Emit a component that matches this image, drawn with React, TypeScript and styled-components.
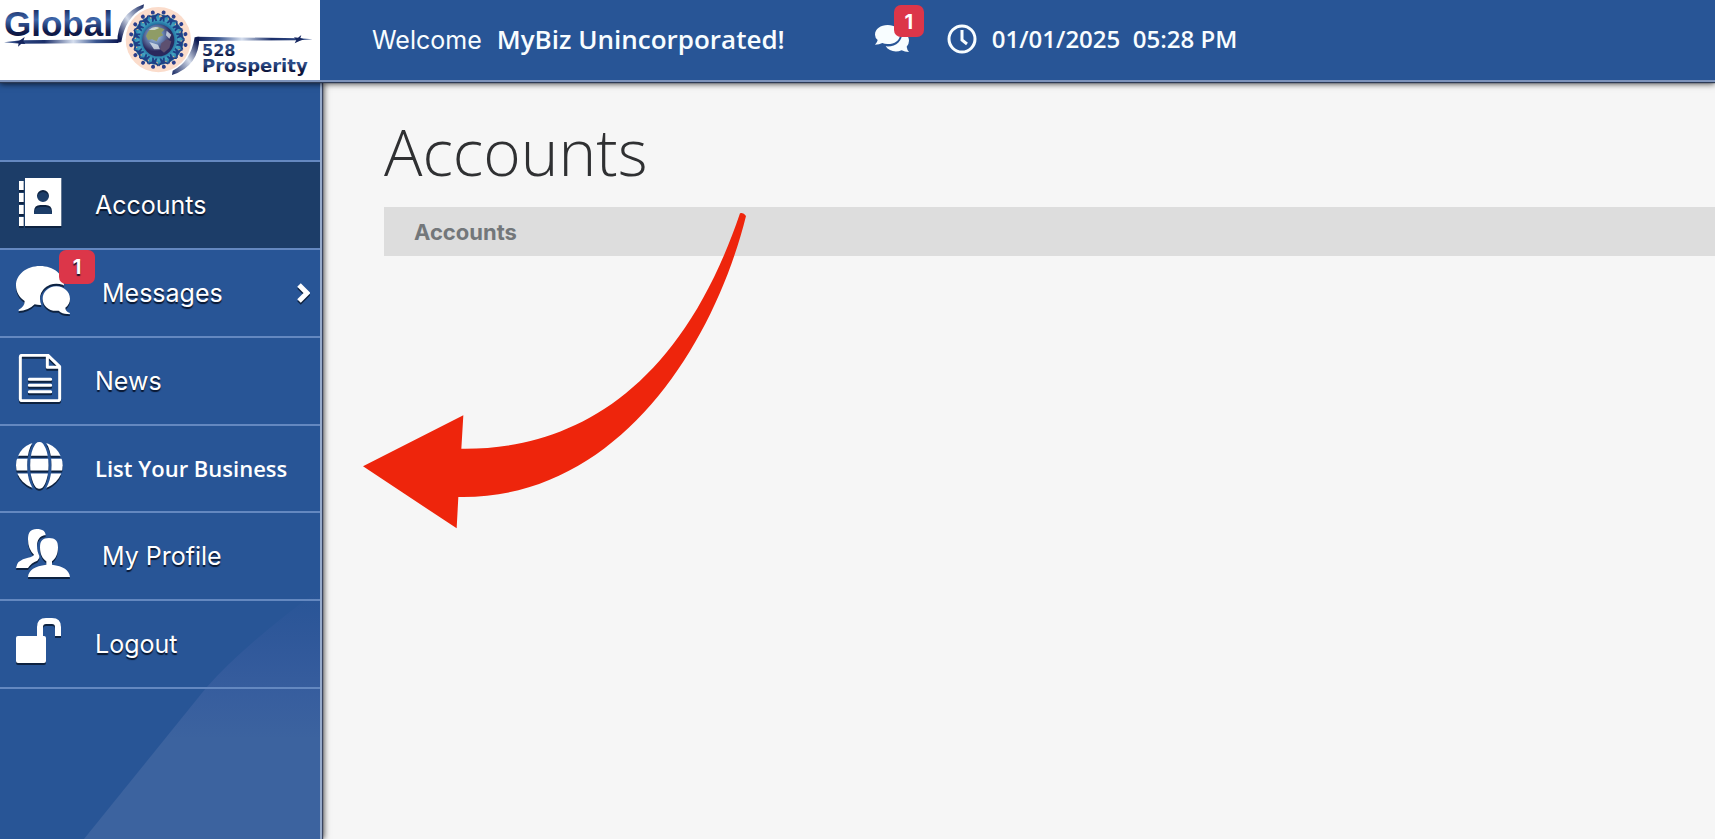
import React from "react";
import styled, { createGlobalStyle } from "styled-components";

const GlobalStyle = createGlobalStyle`
  *, *::before, *::after { box-sizing: border-box; }
  body { margin: 0; background: #f6f6f6; }
`;

const ui = `Inter, "Liberation Sans", sans-serif`;
const humanist = `"Open Sans", "Noto Sans", sans-serif`;

const Page = styled.div`
  min-height: 100vh;
  display: flex;
  flex-direction: column;
  font-family: ${ui};
`;

const Header = styled.header`
  position: relative;
  z-index: 2;
  display: flex;
  height: 82px;
  background: #285596;
  border-bottom: 2px solid #7d93bb;
  box-shadow: 0 1px 1px #2c3a55, 0 2px 6px rgba(0, 0, 0, 0.7);
  color: #f8fdff;
`;

const Brand = styled.a`
  flex: none;
  width: 320px;
  height: 80px;
  background: #fff;
  svg { display: block; }
`;

const HeaderBar = styled.div`
  display: flex;
  align-items: center;
  padding: 0 24px 2px 52px;
  white-space: nowrap;
`;

const Greeting = styled.p`
  margin: 0;
  display: flex;
  align-items: baseline;
  gap: 15px;
  font-size: 25px;
  line-height: 32px;
`;

const Company = styled.strong`
  font-family: ${humanist};
  font-size: 26px;
  font-weight: 600;
`;

const Alerts = styled.a`
  position: relative;
  display: flex;
  width: 34px;
  height: 28px;
  margin-left: 90px;
  color: inherit;
`;

const Clock = styled.time`
  display: flex;
  align-items: center;
  gap: 15px;
  margin-left: 38px;
  font-family: ${humanist};
  font-size: 24px;
  font-weight: 600;
  line-height: 32px;
  white-space: pre;
`;

const Badge = styled.span<{ $place: "header" | "menu" }>`
  position: absolute;
  top: ${(p) => (p.$place === "header" ? "-20px" : "0")};
  left: ${(p) => (p.$place === "header" ? "19px" : "59px")};
  width: ${(p) => (p.$place === "header" ? "30px" : "36px")};
  height: ${(p) => (p.$place === "header" ? "32px" : "34px")};
  border-radius: 7px;
  background: #dc3649;
  color: #fff;
  font-size: 20px;
  font-weight: 700;
  line-height: 34px;
  text-align: center;
`;

const Body = styled.div`
  flex: 1;
  display: flex;
`;

const Sidebar = styled.nav`
  position: relative;
  z-index: 1;
  flex: none;
  width: 322px;
  padding-top: 78px;
  background: #285596;
  border-right: 2px solid #96aacb;
  box-shadow: 1px 0 1px #3a4560, 2px 0 6px rgba(0, 0, 0, 0.7);
`;

const Sheen = styled.svg`
  position: absolute;
  right: 0;
  bottom: 0;
`;

const Menu = styled.ul`
  position: relative;
  margin: 0;
  padding: 0;
  list-style: none;
  border-top: 2px solid #6488c0;
`;

const Item = styled.li<{ $compact?: boolean }>`
  height: ${(p) => (p.$compact ? "87px" : "88px")};
  border-bottom: 2px solid #6488c0;
`;

const ItemLink = styled.a<{ $active?: boolean }>`
  position: relative;
  display: flex;
  align-items: center;
  gap: 32px;
  height: 100%;
  padding: 0 10px 0 16px;
  background: ${(p) => (p.$active ? "#1c3d68" : "transparent")};
  color: #fff;
  font-size: 25px;
  line-height: 32px;
  text-decoration: none;
  text-shadow: 0 2px 1px rgba(5, 15, 35, 0.9);
  white-space: nowrap;
`;

const ItemIcon = styled.svg`
  flex: none;
  margin-bottom: 6px;
  filter: drop-shadow(0 2px 0 #0d2240);
`;

const PlainLabel = styled.span`
  padding-bottom: 2px;
  font-family: ${humanist};
  font-size: 22px;
  font-weight: 600;
  text-shadow: none;
`;

const Chevron = styled.svg`
  margin-left: auto;
  filter: drop-shadow(0 2px 0 #0d2240);
`;

const Main = styled.main`
  position: relative;
  flex: 1;
  min-width: 0;
  padding: 30px 0 0 62px;
`;

const Title = styled.h1`
  margin: 0;
  color: #2f3032;
  font-family: ${humanist};
  font-size: 64px;
  font-weight: 300;
  line-height: 80px;
`;

const Crumbs = styled.div`
  margin-top: 15px;
  padding: 1px 30px 0;
  background: #dddddd;
  color: #73777a;
  font-size: 22px;
  font-weight: 700;
  line-height: 48px;
`;

const Arrow = styled.svg`
  position: absolute;
  top: 130px;
  left: 41px;
`;

const angles = Array.from({ length: 16 }, (_, i) => i * 22.5 + 11);

const Logo = () => (
  <svg width="320" height="80" viewBox="0 0 320 80" role="img" aria-label="Global 528 Prosperity">
    <defs>
      <linearGradient id="ink" x1="0" y1="0" x2="0" y2="1">
        <stop offset="0.1" stopColor="#14265c" />
        <stop offset="0.4" stopColor="#3f68ac" />
        <stop offset="0.7" stopColor="#101c4c" />
        <stop offset="1" stopColor="#0a1238" />
      </linearGradient>
      <linearGradient id="darkInk" x1="0" y1="0" x2="0" y2="1">
        <stop offset="0" stopColor="#14265c" />
        <stop offset="0.4" stopColor="#2f528f" />
        <stop offset="0.8" stopColor="#0a1238" />
      </linearGradient>
      <linearGradient id="rule" x1="0" y1="0" x2="1" y2="0">
        <stop offset="0" stopColor="#3a5690" />
        <stop offset="0.35" stopColor="#1b2f6a" />
        <stop offset="0.6" stopColor="#d5deee" />
        <stop offset="0.8" stopColor="#3a5690" />
        <stop offset="1" stopColor="#0d1a52" />
      </linearGradient>
      <linearGradient id="swoosh" x1="0" y1="1" x2="1" y2="0">
        <stop offset="0.1" stopColor="#0d1a52" />
        <stop offset="0.5" stopColor="#d3dbea" />
        <stop offset="1" stopColor="#152660" />
      </linearGradient>
      <radialGradient id="sea">
        <stop offset="0.6" stopColor="#1d6a9e" />
        <stop offset="0.8" stopColor="#45a5c2" />
        <stop offset="1" stopColor="#2279a8" />
      </radialGradient>
      <radialGradient id="earth" cx="0.4" cy="0.35">
        <stop offset="0" stopColor="#b9cfe0" />
        <stop offset="0.5" stopColor="#6a86b4" />
        <stop offset="1" stopColor="#2a285c" />
      </radialGradient>
    </defs>
    <g transform="scale(0.33333)">
      <path d="M12 127 L62 121 L358 118 L354 129 L62 131 Z" fill="url(#rule)" />
      <path d="M74 111 L70 124 L76 132 L64 131 L54 140 L56 130 L44 126 L58 122 Z" fill="#15265f" />
      <path d="M352 128 Q352 40 432 13 L430 24 Q376 52 364 126 Z" fill="url(#swoosh)" />
      <g transform="rotate(180 475 119)">
        <path d="M12 120 L52 117 L366 115 L360 128 L52 123 Z" fill="url(#rule)" />
        <path d="M66 108 L61 118 L68 126 L56 125 L46 133 L49 124 L38 120 L50 116 Z" fill="#15265f" />
        <path d="M352 128 Q352 40 434 13 L432 26 Q378 52 366 126 Z" fill="url(#swoosh)" />
      </g>
      <circle cx="475" cy="119" r="98" fill="#fbdccb" />
      <circle cx="475" cy="119" r="76" fill="url(#sea)" />
      {angles.map((a) => (
        <g key={a} transform={`rotate(${a} 475 119)`}>
          <path d="M490 54 Q495 38 501 54 Z" fill="#d8b48c" />
          <circle cx="475" cy="36" r="6" fill="#2b3f8c" />
          <path d="M461 40 L469 45 L481 45 L489 40 L491 44 L481 51 L483 63 L478 63 L475 55 L472 63 L467 63 L469 51 L459 44 Z" fill="#1f3f86" />
        </g>
      ))}
      <circle cx="475" cy="121" r="48" fill="url(#earth)" />
      <path d="M438 108 Q446 82 472 80 L494 88 L484 98 L490 106 L476 112 L470 124 L456 118 L444 120 Z" fill="#8f9c66" />
      <path d="M484 130 L500 118 L514 124 L508 144 L492 158 L480 148 Z" fill="#5d5070" />
      <path d="M446 90 Q462 76 478 84 L464 90 Z M500 92 L514 104 L508 116 L498 106 Z M448 126 L474 134 L480 148 L462 148 Z" fill="#e3ebf2" opacity="0.75" />
    </g>
    <text x="4" y="36" fontFamily="Liberation Sans, sans-serif" fontWeight="700" fontSize="35" fill="url(#ink)">Global</text>
    <text x="202" y="56" fontFamily="DejaVu Sans, sans-serif" fontWeight="700" fontSize="16" fill="url(#darkInk)">528</text>
    <text x="202" y="72" fontFamily="DejaVu Sans, sans-serif" fontWeight="700" fontSize="18" fill="url(#darkInk)">Prosperity</text>
  </svg>
);

const AccountsIcon = () => (
  <ItemIcon width="47" height="48" viewBox="48 84 141 144" fill="#fff" aria-hidden="true">
    <path fillRule="evenodd" d="M75 84 H184 V228 H75 Z M129 120 A18 18 0 1 0 129 156 A18 18 0 1 0 129 120 Z M102 192 H156 V184 Q155 165 137 165 H121 Q103 165 102 184 Z" />
    <path d="M57 93 H71 V120 H57 Z M57 129 H71 V156 H57 Z M57 165 H71 V192 H57 Z M57 201 H71 V228 H57 Z" />
  </ItemIcon>
);

const MessagesIcon = () => (
  <ItemIcon width="54" height="48" viewBox="48 348 162 144" fill="#fff" aria-hidden="true">
    <mask id="bubbleGap" maskUnits="userSpaceOnUse" x="48" y="348" width="162" height="144">
      <rect x="48" y="348" width="162" height="144" fill="#fff" />
      <ellipse cx="169" cy="446" rx="49" ry="45" fill="#000" />
    </mask>
    <path mask="url(#bubbleGap)" d="M120 348 C160 348 192 373 192 406 C192 440 160 465 120 465 Q112 465 104 463 Q84 483 56 483 V479 Q74 470 74 453 C58 443 48 426 48 406 C48 373 80 348 120 348 Z" />
    <path d="M169 409 C192 409 210 426 210 446 C210 457 205 466 196 473 Q196 484 210 489 V491 Q190 495 176 482 C148 486 128 468 128 446 C128 426 146 409 169 409 Z" />
  </ItemIcon>
);

const NewsIcon = () => (
  <ItemIcon width="47" height="48" viewBox="48 60 141 144" fill="none" stroke="#fff" strokeWidth="9" strokeLinejoin="round" aria-hidden="true">
    <path d="M66 64 H144 L179 98 V195 Q179 200 174 200 H66 Q61 200 61 195 V69 Q61 64 66 64 Z M142 66 V100 H178" />
    <path strokeLinecap="round" d="M88 136 H152 M88 154 H152 M88 173 H152" />
  </ItemIcon>
);

const GlobeIcon = () => (
  <ItemIcon width="47" height="47" viewBox="48 327 141 141" aria-hidden="true">
    <mask id="gridLines" maskUnits="userSpaceOnUse" x="48" y="327" width="141" height="141">
      <rect x="48" y="327" width="141" height="141" fill="#fff" />
      <g fill="none" stroke="#000" strokeWidth="9">
        <ellipse cx="118" cy="397" rx="32" ry="76" />
        <path d="M44 373 H192 M44 417 H192" />
      </g>
    </mask>
    <circle cx="118" cy="397" r="70" fill="#fff" mask="url(#gridLines)" />
  </ItemIcon>
);

const ProfileIcon = () => (
  <ItemIcon width="54" height="48" viewBox="48 57 162 144" fill="#fff" aria-hidden="true">
    <path d="M110 57 C128 57 136 64 137 75 C118 78 111 90 111 108 C111 120 114 130 118 138 Q120 146 112 152 Q94 158 84 174 H48 Q50 150 84 143 Q99 140 102 134 Q84 118 84 88 C84 67 92 57 110 57 Z" />
    <path d="M147 84 C166 84 174 92 174 112 C174 133 166 147 156 154 V164 C190 168 208 180 210 201 H84 C86 180 104 168 139 164 V154 C128 147 120 133 120 112 C120 92 128 84 147 84 Z" />
  </ItemIcon>
);

const LogoutIcon = () => (
  <ItemIcon width="47" height="46" viewBox="48 330 141 138" fill="#fff" aria-hidden="true">
    <path d="M54 384 H111 V357 Q111 330 138 330 H156 Q183 330 183 357 V384 H165 V357 Q165 348 156 348 H138 Q129 348 129 357 V384 H132 Q138 384 138 390 V459 Q138 465 132 465 H54 Q48 465 48 459 V390 Q48 384 54 384 Z" />
  </ItemIcon>
);

const items = [
  { label: "Accounts", icon: AccountsIcon, active: true },
  { label: "Messages", icon: MessagesIcon, count: 1, nested: true },
  { label: "News", icon: NewsIcon },
  { label: "List Your Business", icon: GlobeIcon, plain: true },
  { label: "My Profile", icon: ProfileIcon },
  { label: "Logout", icon: LogoutIcon },
];

export default function App() {
  return (
    <Page>
      <GlobalStyle />
      <Header>
        <Brand href="#home"><Logo /></Brand>
        <HeaderBar>
          <Greeting>
            Welcome <Company>MyBiz Unincorporated!</Company>
          </Greeting>
          <Alerts href="#messages" aria-label="1 new message">
            <svg width="34" height="28" viewBox="165 75 102 84" fill="currentColor" aria-hidden="true">
              <path d="M203 75 C224 75 240 87 240 104 C240 121 224 132 203 132 Q194 132 187 129 Q178 134 165 134 Q172 127 173 120 Q165 113 165 104 C165 87 182 75 203 75 Z" />
              <path d="M246 96 C260 101 267 111 267 122 Q267 132 260 140 Q261 149 267 156 Q254 156 245 151 C226 159 206 153 197 139 C226 142 249 124 246 96 Z" />
            </svg>
            <Badge $place="header">1</Badge>
          </Alerts>
          <Clock dateTime="2025-01-01T17:28">
            <svg width="30" height="30" viewBox="0 0 30 30" fill="none" stroke="currentColor" strokeWidth="3" aria-hidden="true">
              <circle cx="15" cy="15" r="13" />
              <path d="M15 6 V16 L20 20" />
            </svg>
            {"01/01/2025  05:28 PM"}
          </Clock>
        </HeaderBar>
      </Header>
      <Body>
        <Sidebar aria-label="Main menu">
          <Sheen width="236" height="260" viewBox="0 0 236 260" aria-hidden="true">
            <defs>
              <linearGradient id="fade" x1="0" y1="0" x2="0" y2="1">
                <stop offset="0" stopColor="#3b5aa0" stopOpacity="0" />
                <stop offset="0.42" stopColor="#3b60a0" stopOpacity="0.8" />
                <stop offset="0.6" stopColor="#3c639f" />
              </linearGradient>
            </defs>
            <path d="M0 260 L122 109 Q160 66 236 10 V260 Z" fill="url(#fade)" />
          </Sheen>
          <Menu>
            {items.map(({ label, icon: Icon, active, count, nested, plain }) => (
              <Item key={label} $compact={plain}>
                <ItemLink href={`#${label.toLowerCase().replace(/ /g, "-")}`} $active={active} aria-current={active ? "page" : undefined}>
                  <Icon />
                  {count && <Badge $place="menu">{count}</Badge>}
                  {plain ? <PlainLabel>{label}</PlainLabel> : <span>{label}</span>}
                  {nested && (
                    <Chevron width="14" height="20" viewBox="0 0 14 20" fill="none" stroke="#fff" strokeWidth="5" aria-hidden="true">
                      <path d="M3 2 L11 10 L3 18" />
                    </Chevron>
                  )}
                </ItemLink>
              </Item>
            ))}
          </Menu>
        </Sidebar>
        <Main>
          <Title>Accounts</Title>
          <Crumbs>Accounts</Crumbs>
          <Arrow width="384" height="317" viewBox="39 36 1152 951" aria-hidden="true">
            <path d="M39 799 L340 646 L334 746 C640 750 980 600 1170 40 Q1180 36 1188 48 C1090 440 800 900 325 891 L320 985 Z" fill="#ee250c" />
          </Arrow>
        </Main>
      </Body>
    </Page>
  );
}
